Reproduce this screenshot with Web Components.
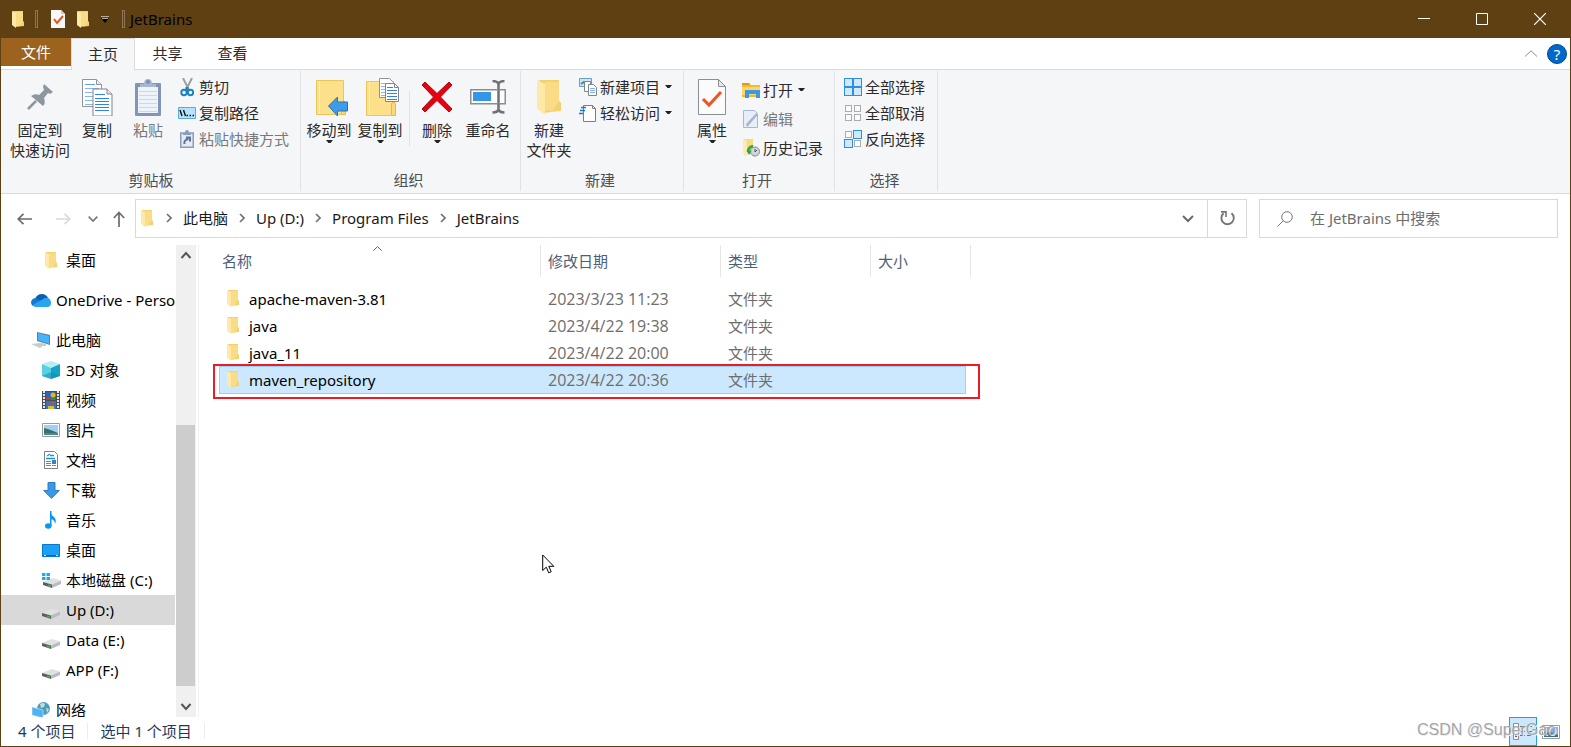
<!DOCTYPE html>
<html lang="zh-CN">
<head>
<meta charset="utf-8">
<title>JetBrains</title>
<style>
html, body { margin: 0; height: 100%; }
body { font: 15px/20px "Noto Sans", "Noto Sans CJK SC", sans-serif; color: #000; background: #fff; }
</style>
</head>
<body>
<explorer-window></explorer-window>

<script>
const FOLDER = '<path d="M1 0h10v10l1 1v4l-9 1z" fill="#f5d070"/><path d="M4 1h7v9l-3 5h-4z" fill="#fadb86"/><path d="M0 0l4 2v15l-4-3z" fill="#ffe9a8"/>';
const SHEET = (x, y, s) => `<path d="M${x} ${y}h14l5 5v22h-19z" fill="#fff" stroke="${s}"/><path d="M${x + 14} ${y}v5h5" fill="#e8eaec" stroke="${s}"/>`;
const LINES = (x, y, w, n, c, g) => { let s = ''; for (let i = 0; i < n; i++) s += `M${x} ${y + i * g}h${w}`; return `<path d="${s}" stroke="${c}" fill="none"/>`; };
const DRIVE = '<path d="M0 10l10-4 8 2.500-9 4z" fill="#dfe1e3"/><path d="M0 10l9 2.500V16l-9-3z" fill="#5c5f62"/><path d="M9 12.500l9-4V12l-9 4z" fill="#b9bcbf"/><path d="M5 13.200l3 .8" stroke="#35c43a" stroke-width="1.600"/>';
const CELL = (x, y, on) => on ? `<rect x="${x}.5" y="${y}.5" width="8" height="8" fill="#cfe9fb" stroke="#2e8fe0"/>` : `<rect x="${x + 1}.5" y="${y + 1}.5" width="6" height="6" fill="#fafbfc" stroke="#a9abae"/>`;
const BIGFOLDER = '<path d="M.5 1.500h27v34h-27z" fill="#fde08a" stroke="#ecc45c"/><path d="M3.500 2v33" stroke="#fff0b8"/><path d="M25.500 35.500v-12q3-3 4 0v12z" fill="#fbd978" stroke="#e6b848"/>';

/* name: [width, height, drawing] */
const ICONS = {
  folder: [12, 17, FOLDER],
  props: [14, 18, '<path d="M0 0h10l4 4v14H0z" fill="#f8f8f8"/><path d="M10 0v4h4" fill="#c9ccd0"/><path d="M3 9l3 4 6-7" stroke="#e8501c" stroke-width="2" fill="none"/>'],
  qat: [8, 8, '<path d="M0 1.500h8" stroke="#b8ab98"/><path d="M0 3h8L4 8z" fill="#000"/><path d="M1 3.500h6" stroke="#b8ab98"/>'],
  min: [12, 12, '<path d="M0 5.500h12" stroke="#fff"/>'],
  max: [12, 12, '<path d="M.5.5h11v11H.5z" stroke="#fff" fill="none"/>'],
  close: [12, 12, '<path d="M0 0l12 12M12 0L0 12" stroke="#fff" stroke-width="1.200"/>'],
  upthin: [12, 7, '<path d="M0 6.500L6 .8l6 5.700" stroke="#8f8f8f" fill="none"/>'],
  sort: [9, 5, '<path d="M.3 4.700L4.500.6l4.200 4.100" stroke="#666" fill="none"/>'],
  help: [20, 20, '<circle cx="10" cy="10" r="9.500" fill="#0067cc" stroke="#08498c"/>'],
  back: [15, 12, '<path d="M15 6H1M6.500.8L1.200 6l5.300 5.200" stroke="#6b6b6b" stroke-width="1.700" fill="none"/>'],
  forward: [15, 12, '<path d="M0 6h14M8.500.8L13.800 6l-5.300 5.200" stroke="#d9d9d9" stroke-width="1.700" fill="none"/>'],
  up: [12, 16, '<path d="M6 16V1.500M.8 7L6 1.500 11.200 7" stroke="#6b6b6b" stroke-width="1.700" fill="none"/>'],
  down: [10, 6, '<path d="M.7.7L5 5l4.300-4.300" stroke="#777" stroke-width="1.700" fill="none"/>'],
  dropdown: [12, 8, '<path d="M1 1l5 5 5-5" stroke="#6b6b6b" stroke-width="2" fill="none"/>'],
  scrollup: [12, 8, '<path d="M1.500 7L6 2l4.500 5" stroke="#555" stroke-width="2" fill="none"/>'],
  scrolldown: [12, 8, '<path d="M1.500 1L6 6l4.500-5" stroke="#555" stroke-width="2" fill="none"/>'],
  crumb: [6, 10, '<path d="M1 1l4 4-4 4" stroke="#707070" stroke-width="1.600" fill="none"/>'],
  refresh: [15, 15, '<path d="M11.500 2.200A6.200 6.200 0 1 1 3.600 2.300" stroke="#757575" stroke-width="1.900" fill="none"/><path d="M1 .9h5v5" stroke="#757575" stroke-width="1.600" fill="none"/>'],
  search: [16, 16, '<circle cx="10" cy="6" r="5.300" stroke="#777" fill="none"/><path d="M6.300 9.700L.5 15.500" stroke="#777"/>'],
  caret: [7, 4, '<path d="M0 0h7l-2.500 3h-2z" fill="#222"/>'],
  pin: [26, 26, '<path d="M17 0l9 8-3 2-2-1-4 5q2 5-1 8L4 12q4-3 8-1l5-5-1-3z" fill="#8c979f"/><path d="M9 17L1 25" stroke="#8c979f" stroke-width="2.500"/>'],
  copy: [31, 37, SHEET(.5, .5, '#909398') + LINES(3, 5.500, 10, 1, '#5b9cf5', 4) + LINES(3, 9.500, 14, 5, '#8ab4ee', 4) + '<g transform="translate(10.500 9.500)">' + SHEET(.5, .5, '#808388') + '</g>' + LINES(13, 15.500, 10, 1, '#2f80f5', 4) + LINES(13, 19.500, 14, 5, '#2f80f5', 3)],
  paste: [26, 37, '<rect y="4" width="26" height="33" rx="1" fill="#8295b8"/><path d="M3 8h20v26H3z" fill="#eef3fa"/><path d="M5 8V5h4q0-5 4-5t4 5h4v3z" fill="#a9b6cf"/><circle cx="13" cy="3" r="2" fill="#7d8fb3"/>' + LINES(4, 12.500, 18, 6, '#c9d7ec', 4)],
  cut: [14, 19, '<path d="M3 0l6 12M12 0L6 12" stroke="#9aa0a6" stroke-width="2"/><circle cx="4" cy="14.500" r="2.700" stroke="#1c82c4" stroke-width="2" fill="none"/><circle cx="10.500" cy="14.500" r="2.700" stroke="#1c82c4" stroke-width="2" fill="none"/><path d="M7 9v4" stroke="#1c82c4" stroke-width="3"/>'],
  path: [18, 12, '<path d="M.5.5h17v11H.5z" fill="#b5e2fc" stroke="#5ea9dd"/><path d="M2 3l2 6M5.500 3l2 6" stroke="#111" stroke-width="1.400"/><path d="M8.500 8.500h1.500M11.500 8.500h1.500M14.500 8.500H16" stroke="#111" stroke-width="1.500"/>'],
  shortcut: [14, 18, '<path d="M.75 3h12.500v14.250H.75z" fill="#e4ebf6" stroke="#8c9cbb" stroke-width="1.500"/><path d="M3 5V3h2q0-3 2-3t2 3h2v2z" fill="#8c9cbb"/><path d="M4.500 14q-1-4 4-5M6 7.500h4v4" stroke="#5f7299" stroke-width="2" fill="none"/>'],
  moveto: [38, 37, '<g transform="translate(6 0)">' + BIGFOLDER + '<path d="M12.500 27l9-9v5h10v9h-10v5z" fill="#3f9ae8" stroke="#2477bd"/></g>'],
  copyto: [40, 38, '<g transform="translate(6 2)">' + BIGFOLDER + '</g><g transform="translate(6 0)"><path d="M13.500.5h10l4 4v15h-14z" fill="#fff" stroke="#909398"/>' + LINES(15, 5.500, 9, 5, '#8ab4ee', 3) + '<path d="M19.500 5.500h9l4 4v14h-13z" fill="#fff" stroke="#808388"/><path d="M28.500 5.500v4h4" fill="none" stroke="#808388"/>' + LINES(21, 9.500, 6, 1, '#2f80f5', 3) + LINES(21, 12.500, 10, 4, '#2f80f5', 3) + '</g>'],
  del: [32, 32, '<path d="M4 1l12 11.500L28 1l3 3-11.500 12L31 28l-3 3-12-11.500L4 31l-3-3 11.500-12L1 4z" fill="#e60012" stroke="#a30d14"/>'],
  rename: [36, 34, '<path d="M.75 9.750h34.500v14H.75z" fill="#fff" stroke="#8a8d91" stroke-width="1.500"/><path d="M3 12h18v9H3z" fill="#3596e8"/><path d="M27 9h3v15h-3z" fill="#fff"/><path d="M22.500 1q5 0 6 3 1-3 6-3M22.500 32.500q5 0 6-3 1 3 6 3M28.500 4v26" stroke="#6e7276" stroke-width="2.500" fill="none"/>'],
  newfolder: [24, 35, '<g transform="scale(2 2.058)">' + FOLDER + '</g>'],
  newitem: [18, 18, '<path d="M.5.5h12v8H.5z" fill="#cfe6f7" stroke="#6a9dc4"/><path d="M2 6l3-2 3 2" stroke="#2d8fa0" stroke-width="2" fill="none"/><path d="M5.500 3.500h6v10h-6z" fill="#fff" stroke="#808488"/><path d="M9.500 6.500h5l3 3v8h-8z" fill="#fff" stroke="#808488"/>' + LINES(11, 10.500, 5, 3, '#7fb2ef', 2)],
  access: [18, 18, '<path d="M4.500 1.500h9l3 3v13h-12z" fill="#fff" stroke="#7b7e82"/><path d="M13.500 1.500v3h3" fill="none" stroke="#7b7e82"/><path d="M2 3.500h5M1 6.500h5M0 9.500h4" stroke="#1d78c8" stroke-width="1.500"/>'],
  bigprops: [28, 36, '<path d="M.5.5h20l7 7v28H.5z" fill="#fbfbfc" stroke="#8b8e92"/><path d="M20.500.5v7h7z" fill="#e5e7ea" stroke="#8b8e92"/><path d="M5 20l6 6 12-13" stroke="#f0541e" stroke-width="3" fill="none"/>'],
  open: [18, 17, '<path d="M0 1h7l2 2h9v12H0z" fill="#f0b93c"/><path d="M0 1h7l1 2H0z" fill="#dc9a1c"/><path d="M0 5h18v8H0z" fill="#ffd767"/><path d="M3 8h15v8h-4v-4H7v4H3z" fill="#3b98e2"/>'],
  edit: [16, 18, '<path d="M.5.5h11l3 3v14H.5z" fill="#e7eef8" stroke="#a8b7d0"/><path d="M14 4L5 14l-1 2" stroke="#a3b4cf" stroke-width="2.500" fill="none"/>'],
  history: [17, 18, '<path d="M1 0h9v14l-9 2z" fill="#f9d981"/><path d="M0 0l4 2v15l-4-3z" fill="#ffebb0"/><circle cx="12" cy="12.500" r="4.500" fill="#d4d7da" stroke="#84888c"/><path d="M12 10v3l2-2" stroke="#555" fill="none"/><path d="M5 13q0-5 5-6" stroke="#27a744" stroke-width="2.500" fill="none"/><path d="M3.500 11l5 1-2.500 4z" fill="#27a744"/>'],
  all: [18, 18, CELL(0, 0, 1) + CELL(9, 0, 1) + CELL(0, 9, 1) + CELL(9, 9, 1)],
  none: [18, 18, CELL(0, 0) + CELL(9, 0) + CELL(0, 9) + CELL(9, 9)],
  invert: [18, 18, CELL(0, 0) + CELL(9, 0, 1) + CELL(0, 9, 1) + CELL(9, 9)],
  onedrive: [20, 13, '<path d="M4 5Q6 0 11 0q4 0 6 4l-7 5z" fill="#0a5fb4"/><path d="M4 12.500Q0 12 0 8q1-4 5-4l7 4-5 5z" fill="#0f7bd4"/><path d="M5 13q-3-1-3-2l10-6q2-2 5-1 3 1 3 5t-4 4z" fill="#29a4ec"/>'],
  pc: [20, 17, '<path d="M6 0l13 3v10L6 9z" fill="#5a7f9c"/><path d="M7 1l11 3v8L7 8z" fill="#48b4f8"/><path d="M0 12l9-1 4 2-4 3zM10 11l5 1v2l-4 0z" fill="#c7cbcf"/>'],
  cube: [18, 18, '<path d="M0 3l9-3 9 3-9 4z" fill="#b4eef5"/><path d="M0 3l9 4v11l-9-3z" fill="#5acfe2"/><path d="M18 3L9 7v11l9-3z" fill="#12a5c9"/><path d="M0 15l9-4 9 4-9 3z" fill="#0b86b4" opacity=".5"/>'],
  video: [18, 18, '<path d="M0 0h18v18H0z" fill="#4a4d50"/><path d="M2 0v18M16 0v18" stroke="#e8e8e8" stroke-width="2" stroke-dasharray="2 1"/><path d="M4 1h10v8H4z" fill="#2c64b8"/><path d="M4 10h10v8H4z" fill="#3873c7"/><path d="M4 6h4v2H4z" fill="#d33"/><circle cx="11" cy="4" r="2.500" fill="#d8b92c"/><path d="M9 7h4v2H9z" fill="#35912d"/><circle cx="10" cy="12" r="1.500" fill="#d64a28"/><path d="M6 15h6v3H6z" fill="#e0bd30"/>'],
  picture: [18, 14, '<path d="M.5.5h17v13H.5z" fill="#fff" stroke="#999da0"/><path d="M2 2h14v10H2z" fill="#9fd0f7"/><path d="M2 5q5 1 14 5v2H2z" fill="#3f6f5d"/><path d="M2 10h14v2H2z" fill="#4685b8"/>'],
  doc: [14, 18, '<path d="M.5.5h10l3 3v14H.5z" fill="#fff" stroke="#7e8286"/><path d="M3 5l3-2M6 4.500h4M2 7.500h9" stroke="#1892dd" stroke-width="1.300"/>' + LINES(2, 10.500, 5, 3, '#7e8286', 2) + LINES(8, 14.500, 4, 1, '#7e8286', 2) + '<path d="M8 9h4v4H8z" fill="#3f7fc0"/>'],
  download: [17, 17, '<path d="M5 .5h7v8h4.300L8.500 16.300.7 8.500H5z" fill="#3b98e6" stroke="#2a7cc4"/>'],
  music: [12, 18, '<path d="M5 15V0q1 4 4 6 3 3 1 7 0-4-4-5" fill="#0d98ea"/><path d="M5 0h1.500v15H5z" fill="#0d98ea"/><ellipse cx="3.300" cy="15" rx="3.300" ry="2.700" fill="#0d98ea"/>'],
  desktop: [18, 13, '<path d="M.5.5h17v12H.5z" fill="#1ba0f5" stroke="#0878cc"/><path d="M1 11.500h16" stroke="#0a66b4"/><path d="M2 11.500h2M14 11.500h2" stroke="#fff"/>'],
  drive: [18, 18, '<g transform="translate(0 2)">' + DRIVE + '</g>'],
  sysdrive: [19, 17, '<g transform="translate(1 0)">' + DRIVE + '</g><path d="M0 1h3.500v3H0zM4.500 1H8v3H4.500zM0 5h3.500v3H0zM4.500 5H8v3H4.500z" fill="#12b0ee"/>'],
  network: [18, 16, '<circle cx="11.500" cy="6.500" r="6.500" fill="#4d9cc0"/><path d="M8 2q3-2 5 0l-1 3-3 1zM14 6l3 1-2 4z" fill="#bfe3c9"/><path d="M0 5l11 3v8L0 13z" fill="#4eb2f5" stroke="#c9dfee" stroke-width=".7"/>'],
  details: [20, 17, '<path d="M.5.500h5v16h-5z" fill="#fff" stroke="#8b8f93"/><path d="M2 3h2v2H2zM2 12h2v2H2z" fill="#b8442c"/><path d="M2 7h2v2H2z" fill="#d09a45"/><path d="M7 3.500h5M14 3.500h5M7 8.500h5M14 8.500h5M7 12.500h5M14 12.500h5" stroke="#6a6e72"/>'],
  thumbs: [18, 14, '<path d="M.5.5h17v13H.5z" fill="#fff" stroke="#999da1"/><path d="M2 2h14v10H2z" fill="#78b4ee"/><path d="M2 7q6-1 14 3v2H2z" fill="#3d7084"/>'],
  cursor: [13, 20, '<path d="M.7 1v15.500l3.600-3.300 2.400 5.600 2.500-1.100-2.400-5.400h5z" fill="#fff" stroke="#000"/>']
};

const define = (name, css, html) => customElements.define(name, class extends HTMLElement {
  constructor() {
    super();
    const t = document.createElement('template');
    t.innerHTML = `<style>*{box-sizing:border-box}button{font:inherit;color:inherit;background:none;border:0;padding:0}a{color:inherit;text-decoration:none}${css}</style>` + (typeof html === 'function' ? html(this) : html);
    this.attachShadow({ mode: 'open' }).append(t.content.cloneNode(true));
  }
});

define('fx-icon', ':host{display:inline-block;flex:none;line-height:0}svg{display:block}', el => {
  const [w, h, d] = ICONS[el.getAttribute('name')];
  return `<svg width="${w}" height="${h}" viewBox="0 0 ${w} ${h}" aria-hidden="true">${d}</svg>`;
});

define('title-bar', `
:host{display:flex;align-items:center;height:38px;background:#5f4013;padding:0 2px 0 12px}
.quick{display:flex;align-items:center;gap:11px;flex:1}
.quick button{display:flex}
i{width:3px;height:18px;border:1px solid #8d7655}
.tools{display:flex;align-items:center;gap:12px;margin:0 2px}
.name{margin-left:-6px}
.win{display:flex;height:38px}
.win button{width:58px;display:grid;place-items:center}`, `
<div class="quick"><fx-icon name="folder"></fx-icon><i></i>
<div class="tools"><button aria-label="属性"><fx-icon name="props"></fx-icon></button><button aria-label="新建文件夹"><fx-icon name="folder"></fx-icon></button><button aria-label="自定义"><fx-icon name="qat"></fx-icon></button></div>
<i></i><span class="name">JetBrains</span></div>
<div class="win"><button aria-label="最小化"><fx-icon name="min"></fx-icon></button><button aria-label="最大化"><fx-icon name="max"></fx-icon></button><button aria-label="关闭"><fx-icon name="close"></fx-icon></button></div>`);

define('ribbon-tabs', `
:host{display:flex;height:32px;border-bottom:1px solid #dadbdc;background:#fff;color:#2b2b2b}
button{width:65px;height:30px}
.file{width:70px;height:28px;background:#9b631e;color:#fff}
.on{width:64px;height:32px;background:#f5f6f8;border:1px solid #dadbdc;border-width:1px 1px 0;padding-bottom:2px}
.end{margin-left:auto;display:flex;align-items:center;gap:10px;padding-right:3px}
.end button{width:auto;height:auto;display:grid;place-items:center}
.help fx-icon,.help span{grid-area:1/1}
.help span{color:#fff;z-index:1}`, `
<button class="file">文件</button><button class="on">主页</button><button>共享</button><button>查看</button>
<div class="end"><button aria-label="折叠功能区"><fx-icon name="upthin"></fx-icon></button><button class="help"><fx-icon name="help"></fx-icon><span>?</span></button></div>`);

define('big-button', `
:host{display:block;width:50px}
:host([wide]){width:62px}
:host([disabled]){color:#77797c}
button{display:flex;flex-direction:column;align-items:center;width:100%;white-space:nowrap}
.art{height:42px;display:grid;place-items:center;margin-bottom:2px}
.arrow{height:4px}`, el => `
<button${el.hasAttribute('disabled') ? ' disabled' : ''}><span class="art"><fx-icon name="${el.getAttribute('icon')}"></fx-icon></span><slot></slot>${el.hasAttribute('menu') ? '<fx-icon class="arrow" name="caret"></fx-icon>' : ''}</button>`);

define('small-button', `
:host{display:block}
:host([disabled]){color:#77797c}
button{display:flex;align-items:center;gap:3px;height:20px;white-space:nowrap}
.art{width:18px;display:grid;place-items:center}
.arrow{margin-left:2px}`, el => `
<button${el.hasAttribute('disabled') ? ' disabled' : ''}><span class="art"><fx-icon name="${el.getAttribute('icon')}"></fx-icon></span><slot></slot>${el.hasAttribute('menu') ? '<fx-icon class="arrow" name="caret"></fx-icon>' : ''}</button>`);

define('button-stack', ':host{display:flex;flex-direction:column;gap:6px;padding:1px 4px 0 4px}:host([loose]){gap:9px;padding-top:4px}', '<slot></slot>');

define('ribbon-group', `
:host{display:flex;flex-direction:column;justify-content:space-between;padding:5px 7px 1px 3px;border-right:1px solid #e1e2e4}
:host([first]){padding-left:8px}
:host([last]){padding-left:5px;padding-right:8px}
.body{display:flex;gap:1px}
.label{text-align:center;color:#4c4f54}`, el => `<div class="body"><slot></slot></div><div class="label">${el.getAttribute('label')}</div>`);

define('ribbon-bar', `
:host{display:flex;height:124px;background:#f5f6f8;border-bottom:1px solid #dadbdc;padding:1px 0 2px;color:#2b2b2b}
hr{width:1px;height:55px;border:0;background:#e1e2e4;margin:15px 1px 0 3px}`, `
<ribbon-group first label="剪贴板"><big-button wide icon="pin">固定到<br>快速访问</big-button><big-button icon="copy">复制</big-button><big-button disabled icon="paste">粘贴</big-button>
<button-stack><small-button icon="cut">剪切</small-button><small-button icon="path">复制路径</small-button><small-button disabled icon="shortcut">粘贴快捷方式</small-button></button-stack></ribbon-group>
<ribbon-group label="组织"><big-button menu icon="moveto">移动到</big-button><big-button menu icon="copyto">复制到</big-button><hr><big-button menu icon="del">删除</big-button><big-button icon="rename">重命名</big-button></ribbon-group>
<ribbon-group label="新建"><big-button icon="newfolder">新建<br>文件夹</big-button>
<button-stack><small-button menu icon="newitem">新建项目</small-button><small-button menu icon="access">轻松访问</small-button></button-stack></ribbon-group>
<ribbon-group label="打开"><big-button menu icon="bigprops">属性</big-button>
<button-stack loose><small-button menu icon="open">打开</small-button><small-button disabled icon="edit">编辑</small-button><small-button icon="history">历史记录</small-button></button-stack></ribbon-group>
<ribbon-group last label="选择"><button-stack><small-button icon="all">全部选择</small-button><small-button icon="none">全部取消</small-button><small-button icon="invert">反向选择</small-button></button-stack></ribbon-group>`);

define('nav-bar', `
:host{display:flex;align-items:center;padding:5px 12px 7px 4px;color:#1a1a1a}
button{display:grid;place-items:center;height:39px;width:39px}
.hist{width:19px}.up{width:33px}
.address{flex:1;display:flex;align-items:center;height:39px;border:1px solid #d9d9d9;padding-left:5px}
nav{flex:1;display:flex;align-items:center;padding:0 0 2px 2px}
nav a{white-space:nowrap}
.sep{width:28px;display:grid;place-items:center}
.fresh{border-left:1px solid #d9d9d9;height:37px}
label{display:flex;align-items:center;gap:17px;width:299px;height:39px;margin-left:12px;border:1px solid #d9d9d9;padding-left:17px}
input{flex:1;min-width:0;border:0;outline:0;padding:0 0 2px;font:inherit;background:none}
input::placeholder{color:#6d6d6d;opacity:1}`, `
<button aria-label="后退"><fx-icon name="back"></fx-icon></button><button aria-label="前进"><fx-icon name="forward"></fx-icon></button><button class="hist" aria-label="最近"><fx-icon name="down"></fx-icon></button><button class="up" aria-label="上移"><fx-icon name="up"></fx-icon></button>
<div class="address"><fx-icon name="folder"></fx-icon><nav><span class="sep"><fx-icon name="crumb"></fx-icon></span><a href="#pc">此电脑</a><span class="sep"><fx-icon name="crumb"></fx-icon></span><a href="#d">Up (D:)</a><span class="sep"><fx-icon name="crumb"></fx-icon></span><a href="#pf">Program Files</a><span class="sep"><fx-icon name="crumb"></fx-icon></span><a href="#jb">JetBrains</a></nav>
<button aria-label="历史位置"><fx-icon name="dropdown"></fx-icon></button><button class="fresh" aria-label="刷新"><fx-icon name="refresh"></fx-icon></button></div>
<label><fx-icon name="search"></fx-icon><input type="text" aria-label="搜索" placeholder="在 JetBrains 中搜索"></label>`);

define('tree-item', `
:host{display:block}
:host([gap]){margin-top:10px}
a{display:flex;align-items:center;height:30px;padding-left:40px;gap:5px;white-space:nowrap}
:host([root]) a{padding-left:30px}
:host([selected]) a{background:#d9d9d9}
.art{width:20px;display:grid;place-items:center}`, el => `<a href="#"><span class="art"><fx-icon name="${el.getAttribute('icon')}"></fx-icon></span><slot></slot></a>`);

define('scroll-track', `
:host{display:flex;flex-direction:column;width:20px;background:#f0f0f0}
button{height:20px;display:grid;place-items:center}
.before{flex:160}.thumb{flex:260;background:#cdcdcd;margin-right:1px}.after{flex:11}`, `
<button aria-label="向上滚动"><fx-icon name="scrollup"></fx-icon></button><div class="before"></div><div class="thumb"></div><div class="after"></div><button aria-label="向下滚动"><fx-icon name="scrolldown"></fx-icon></button>`);

define('side-tree', `
:host{display:flex;width:198px;border-right:1px solid #f0f0f0}
nav{flex:1;min-width:0;overflow:hidden;margin-right:1px}
scroll-track{margin-right:2px}`, `
<nav><tree-item icon="folder">桌面</tree-item><tree-item root gap icon="onedrive">OneDrive - Personal</tree-item><tree-item root gap icon="pc">此电脑</tree-item>
<tree-item icon="cube">3D 对象</tree-item><tree-item icon="video">视频</tree-item><tree-item icon="picture">图片</tree-item><tree-item icon="doc">文档</tree-item><tree-item icon="download">下载</tree-item><tree-item icon="music">音乐</tree-item><tree-item icon="desktop">桌面</tree-item><tree-item icon="sysdrive">本地磁盘 (C:)</tree-item><tree-item selected icon="drive">Up (D:)</tree-item><tree-item icon="drive">Data (E:)</tree-item><tree-item icon="drive">APP (F:)</tree-item><tree-item root gap icon="network">网络</tree-item></nav><scroll-track></scroll-track>`);

const row = (n, d, sel) => `<tr${sel ? ' class="sel"' : ''}><td><a href="#"><fx-icon name="folder"></fx-icon>${n}</a></td><td class="date">${d}</td><td>文件夹</td><td></td></tr>`;
define('file-list', `
:host{display:block;flex:1;min-width:0;padding-left:21px;position:relative}
table{border-collapse:collapse;table-layout:fixed;width:751px;position:relative;z-index:0}
th{padding:0 0 9px;font-weight:400;text-align:left;color:#4c607a}
th div{height:32px;border-right:1px solid #e5e5e5;padding:6px 0 0 7px;position:relative}
th:first-child div{padding-left:2px}
th fx-icon{position:absolute;top:1px;left:153px}
tr{position:relative}
td{height:27px;padding:0 0 2px 7px;color:#6d6d6d}
.date{font-size:16px;font-family:"Open Sans",sans-serif}
td a{display:flex;align-items:center;gap:10px;color:#000}
.sel td:first-child::before{content:"";position:absolute;inset:-1px 5px 0 -1px;background:#cce8ff;border:1px solid #99d1ff;z-index:-1}
.sel td:first-child::after{content:"";position:absolute;inset:-3px -9px -5px -7px;border:2px solid #ed1c24}
.c1{width:321px}.c2{width:180px}.c3{width:150px}.c4{width:100px}
.cursor{position:absolute;left:343px;top:309px}`, `
<table><colgroup><col class="c1"><col class="c2"><col class="c3"><col class="c4"></colgroup>
<thead><tr><th><div>名称<fx-icon name="sort"></fx-icon></div></th><th><div>修改日期</div></th><th><div>类型</div></th><th><div>大小</div></th></tr></thead>
<tbody>${row('apache-maven-3.81', '2023/3/23 11:23')}${row('java', '2023/4/22 19:38')}${row('java_11', '2023/4/22 20:00')}${row('maven_repository', '2023/4/22 20:36', 1)}</tbody></table>
<fx-icon class="cursor" name="cursor"></fx-icon>`);

define('status-bar', `
:host{display:flex;align-items:center;height:29px;padding-left:17px;color:#1e395b;position:relative}
.s{padding-right:12px;margin:0 12px 2px 0;border-right:1px solid #ececec;white-space:nowrap;height:16px;line-height:16px}
.views{margin-left:auto;display:flex;padding-right:5px}
.views button{width:28px;height:29px;display:grid;place-items:center}
.views .on{background:#cce8ff;border:1px solid #26a0da}
.mark{position:absolute;right:14px;top:3px;font:16px/20px "Liberation Sans",sans-serif;color:#a4a6a9;text-shadow:1px 1px 0 #eee}`, `
<span class="s">4 个项目</span><span class="s">选中 1 个项目</span>
<div class="views"><button class="on" aria-label="详细信息"><fx-icon name="details"></fx-icon></button><button aria-label="大缩略图"><fx-icon name="thumbs"></fx-icon></button></div>
<span class="mark">CSDN @SuperGao</span>`);

define('explorer-window', `
:host{display:flex;flex-direction:column;height:100vh;box-sizing:border-box;border:solid #5f4013;border-width:0 1px 1px;background:#fff}
title-bar{margin-left:-1px;margin-right:-1px;flex:none;box-sizing:border-box}
ribbon-tabs,ribbon-bar,nav-bar,status-bar{flex:none;box-sizing:border-box}
main{flex:1;min-height:0;display:flex}`, `
<title-bar></title-bar><ribbon-tabs></ribbon-tabs><ribbon-bar></ribbon-bar><nav-bar></nav-bar>
<main><side-tree></side-tree><file-list></file-list></main><status-bar></status-bar>`);
</script>
</body>
</html>
